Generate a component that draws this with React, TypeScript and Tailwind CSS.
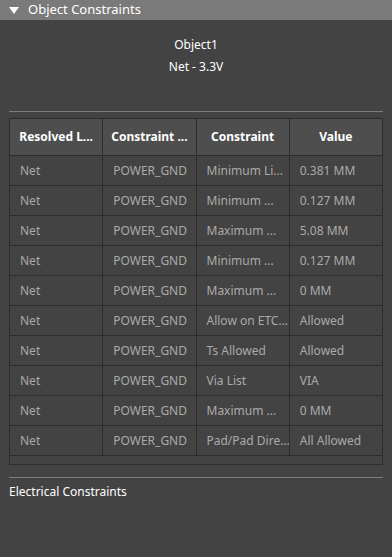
const rows = [
  ["Net", "POWER_GND", "Minimum Li...", "0.381 MM"],
  ["Net", "POWER_GND", "Minimum ...", "0.127 MM"],
  ["Net", "POWER_GND", "Maximum ...", "5.08 MM"],
  ["Net", "POWER_GND", "Minimum ...", "0.127 MM"],
  ["Net", "POWER_GND", "Maximum ...", "0 MM"],
  ["Net", "POWER_GND", "Allow on ETC...", "Allowed"],
  ["Net", "POWER_GND", "Ts Allowed", "Allowed"],
  ["Net", "POWER_GND", "Via List", "VIA"],
  ["Net", "POWER_GND", "Maximum ...", "0 MM"],
  ["Net", "POWER_GND", "Pad/Pad Dire...", "All Allowed"],
];

const headers = ["Resolved L...", "Constraint ...", "Constraint", "Value"];

export default function App() {
  return (
    <div
      className="w-[392px] h-[557px] bg-[#434343] flex flex-col text-[12px]"
      style={{ fontFamily: '"Noto Sans", "Open Sans", sans-serif' }}
    >
      <div className="h-[20px] bg-[#7a7a7a] flex items-center pl-[9px] gap-[9px] text-white text-[13px]">
        <svg width="10" height="7" viewBox="0 0 10 7">
          <path d="M0 0 H10 L5 7 Z" fill="#ffffff" />
        </svg>
        <span>Object Constraints</span>
      </div>

      <div className="flex flex-col items-center pt-[16px] gap-[4px] text-white">
        <span className="leading-[18px]">Object1</span>
        <span className="leading-[18px]">Net - 3.3V</span>
      </div>

      <div className="mx-[9px] mt-[35px] h-px bg-[#7c7c7c]" />

      <div className="mx-[9px] mt-[6px] w-[374px] border border-[#2d2d2d] bg-[#2d2d2d]">
        <div className="grid grid-cols-4 gap-px">
          {headers.map((h) => (
            <div
              key={h}
              className="h-[36px] bg-[#4e4e4e] flex items-center justify-center font-bold text-white"
            >
              {h}
            </div>
          ))}
          {rows.map((r, i) =>
            r.map((c, j) => (
              <div
                key={i + "-" + j}
                className="h-[29px] bg-[#434343] flex items-center pl-[10px] text-[#aaaaaa] whitespace-nowrap overflow-hidden"
              >
                {c}
              </div>
            ))
          )}
        </div>
        <div className="h-[8px] mt-px bg-[#434343]" />
      </div>

      <div className="mx-[9px] mt-[12px] h-px bg-[#7c7c7c]" />
      <div className="pl-[9px] pt-[5px] text-white leading-[18px]">Electrical Constraints</div>
    </div>
  );
}
